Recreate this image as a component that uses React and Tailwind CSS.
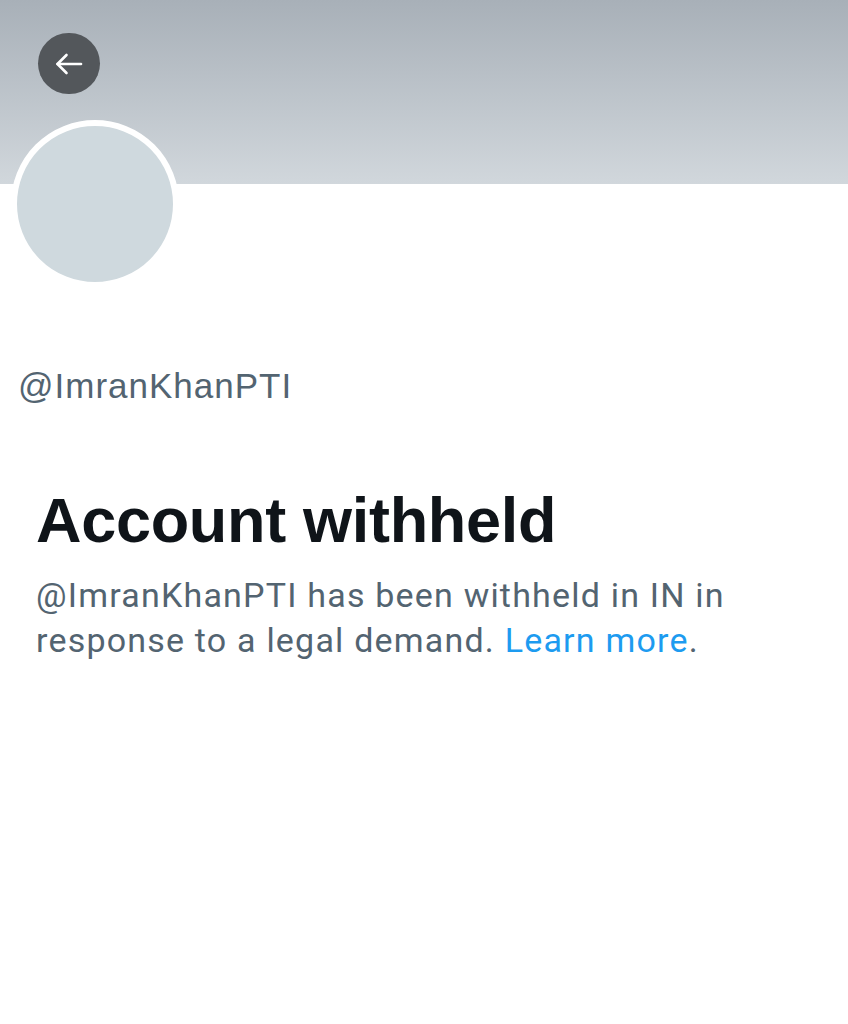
// Withheld-account profile view
function BackArrow() {
  return (
    <svg width="28" height="22" viewBox="0 0 28 22" fill="none" stroke="#ffffff" strokeWidth="2.6" strokeLinecap="round" strokeLinejoin="round">
      <path d="M26 11H2.5" />
      <path d="M11.5 2L2.5 11l9 9" />
    </svg>
  );
}

export default function App() {
  return (
    <div className="w-[848px] min-h-[1024px] bg-white font-['Roboto','Liberation_Sans',sans-serif]">
      {/* banner */}
      <div className="h-[184px] bg-gradient-to-b from-[#a8b0b8] to-[#d1d7dc] pt-[33px] pl-[38px]">
        <button className="w-[62px] h-[61px] rounded-full bg-[#53575b] flex items-center justify-center">
          <BackArrow />
        </button>
      </div>

      {/* avatar */}
      <div className="-mt-[64px] ml-[11px] w-[168px] h-[168px] rounded-full border-[6px] border-white bg-[#cfd9de]" />

      <div className="pl-[18px] mt-[78px] text-[35px] leading-[40px] tracking-[1px] text-[#536471] font-['Liberation_Sans',sans-serif]">
        @ImranKhanPTI
      </div>

      <div className="pl-[36px] mt-[78px]">
        <h1 className="text-[63px] leading-[72px] font-bold text-[#0f1419] tracking-[-0.3px] font-['Liberation_Sans',sans-serif]">
          Account withheld
        </h1>
        <p className="mt-[17px] w-[760px] text-[34px] leading-[45px] tracking-[1.2px] text-[#536471]">
          @ImranKhanPTI has been withheld in IN in response to a legal demand.{" "}
          <a className="text-[#1d9bf0]">Learn more</a>.
        </p>
      </div>
    </div>
  );
}
